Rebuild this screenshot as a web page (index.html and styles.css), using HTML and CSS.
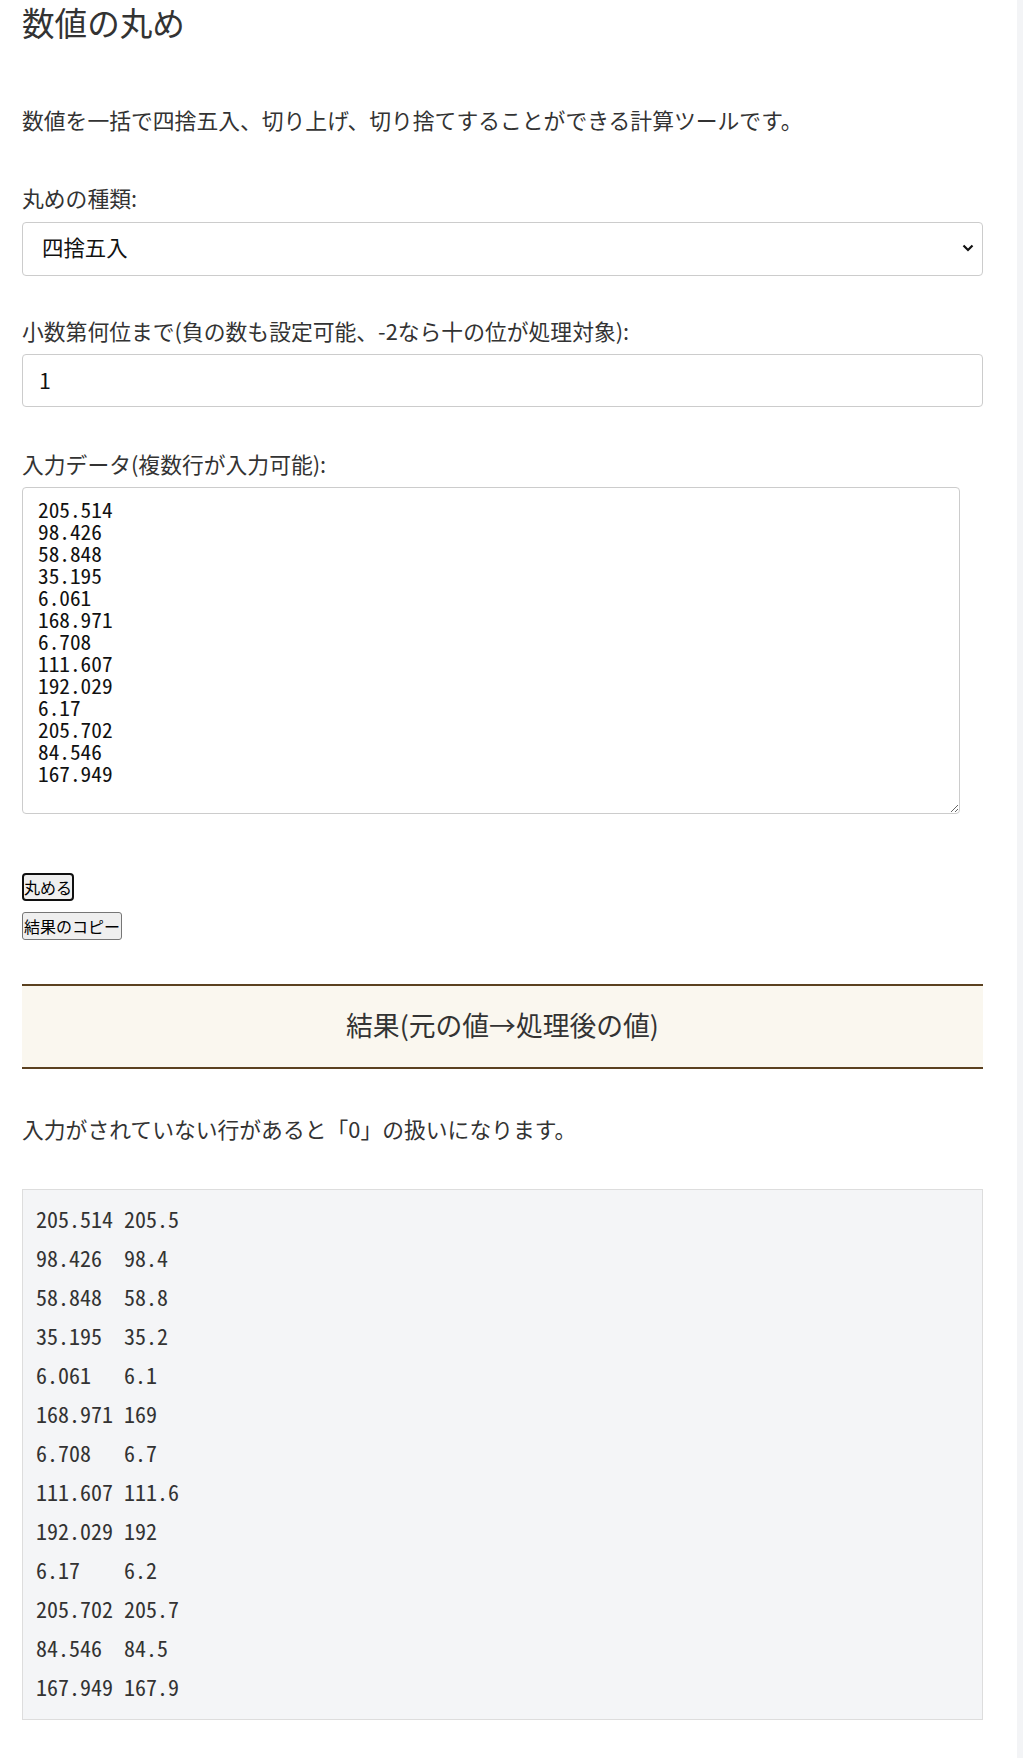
FILE: index.html
```html
<!DOCTYPE html>
<html lang="ja">
<head>
<meta charset="utf-8">
<title>数値の丸め</title>
<link rel="stylesheet" href="styles.css">
</head>
<body>
<main class="page">
  <h1 class="title">数値の丸め</h1>
  <p class="lead">数値を一括で四捨五入、切り上げ、切り捨てすることができる計算ツールです。</p>

  <div class="field field-first">
    <label class="label" for="kind">丸めの種類:</label>
    <div class="select-wrap">
      <select id="kind" class="control select">
        <option>四捨五入</option>
        <option>切り上げ</option>
        <option>切り捨て</option>
      </select>
      <svg class="chevron" width="12" height="8" viewBox="0 0 12 8" aria-hidden="true"><path d="M1.5 1.5 L6 6 L10.5 1.5" fill="none" stroke="#111" stroke-width="2.2"/></svg>
    </div>
  </div>

  <div class="field field-second">
    <label class="label" for="digits">小数第何位まで(負の数も設定可能、-2なら十の位が処理対象):</label>
    <input id="digits" class="control input" type="text" value="1">
  </div>

  <div class="field field-third">
    <label class="label" for="data">入力データ(複数行が入力可能):</label>
    <textarea id="data" class="textarea">205.514
98.426
58.848
35.195
6.061
168.971
6.708
111.607
192.029
6.17
205.702
84.546
167.949</textarea>
  </div>

  <div class="buttons">
    <button class="btn btn-focus" type="button">丸める</button>
    <button class="btn" type="button">結果のコピー</button>
  </div>

  <h2 class="result-head">結果(元の値→処理後の値)</h2>

  <p class="note">入力がされていない行があると「0」の扱いになります。</p>

  <div class="result">
    <div class="row">205.514 205.5</div>
    <div class="row">98.426  98.4</div>
    <div class="row">58.848  58.8</div>
    <div class="row">35.195  35.2</div>
    <div class="row">6.061   6.1</div>
    <div class="row">168.971 169</div>
    <div class="row">6.708   6.7</div>
    <div class="row">111.607 111.6</div>
    <div class="row">192.029 192</div>
    <div class="row">6.17    6.2</div>
    <div class="row">205.702 205.7</div>
    <div class="row">84.546  84.5</div>
    <div class="row">167.949 167.9</div>
  </div>
</main>
</body>
</html>
```

FILE: styles.css
```css
html {
  background: #f3f4f6;
}
body {
  margin: 0;
  width: 1017px;
  min-height: 1758px;
  background: #ffffff;
  font-family: "Noto Sans CJK JP", "Noto Sans", sans-serif;
  color: #333333;
  font-size: 21.8px;
}
.page {
  padding: 0 34px 0 22px;
  display: flex;
  flex-direction: column;
}
.title {
  margin: 0;
  font-size: 32.6px;
  font-weight: 400;
  line-height: 44px;
  color: #333;
}
.lead {
  margin: 60px 0 0;
  line-height: 32px;
}
.field {
  display: flex;
  flex-direction: column;
  gap: 8px;
}
.field-first { margin-top: 46px; }
.field-second { margin-top: 39px; gap: 7px; }
.field-third { margin-top: 41px; gap: 7px; }
.label {
  line-height: 32px;
  color: #333;
}
.select-wrap {
  position: relative;
}
.control {
  box-sizing: border-box;
  width: 100%;
  border: 1px solid #cccccc;
  border-radius: 4px;
  background: #fff;
  font-family: "Noto Sans CJK JP", "Noto Sans", sans-serif;
  font-size: 21.4px;
  color: #111;
  margin: 0;
}
.select {
  appearance: none;
  -webkit-appearance: none;
  height: 54px;
  padding: 0 40px 5px 19px;
  display: block;
}
.chevron {
  position: absolute;
  right: 9px;
  top: 22px;
}
.input {
  height: 53px;
  padding: 0 16px 3px;
  display: block;
  outline: none;
}
.textarea {
  box-sizing: border-box;
  width: 938px;
  height: 327px;
  margin: 0;
  border: 1px solid #cccccc;
  border-radius: 4px;
  padding: 10px 15px;
  font-family: "Noto Sans Mono CJK JP", "Liberation Mono", monospace;
  font-size: 21.3px;
  line-height: 22px;
  color: #111;
  resize: vertical;
  display: block;
}
.buttons {
  margin-top: 59px;
  display: flex;
  flex-direction: column;
  align-items: flex-start;
  gap: 11px;
}
.btn {
  font-family: "Noto Sans CJK JP", sans-serif;
  font-size: 16px;
  line-height: 24px;
  height: 28px;
  padding: 0 1px;
  margin: 0;
  background: #efefef;
  color: #000;
  border: 1px solid #767676;
  border-radius: 3px;
  box-sizing: border-box;
}
.btn-focus {
  border: 2px solid #101010;
  padding: 0 0;
  border-radius: 4px;
}
.result-head {
  margin: 44px 0 0;
  padding: 21px 0 25px;
  line-height: 35px;
  font-size: 26.8px;
  font-weight: 400;
  text-align: center;
  color: #333;
  background: #faf7ef;
  border-top: 2px solid #5b4120;
  border-bottom: 2px solid #5b4120;
}
.note {
  margin: 44px 0 0;
  line-height: 32px;
}
.result {
  margin-top: 44px;
  background: #f4f5f7;
  border: 1px solid #dddddd;
  padding: 9px 13px 13px;
  font-family: "Noto Sans Mono CJK JP", "Liberation Mono", monospace;
  font-size: 22px;
  color: #333;
}
.row {
  height: 39px;
  line-height: 39px;
  white-space: pre;
}
```
